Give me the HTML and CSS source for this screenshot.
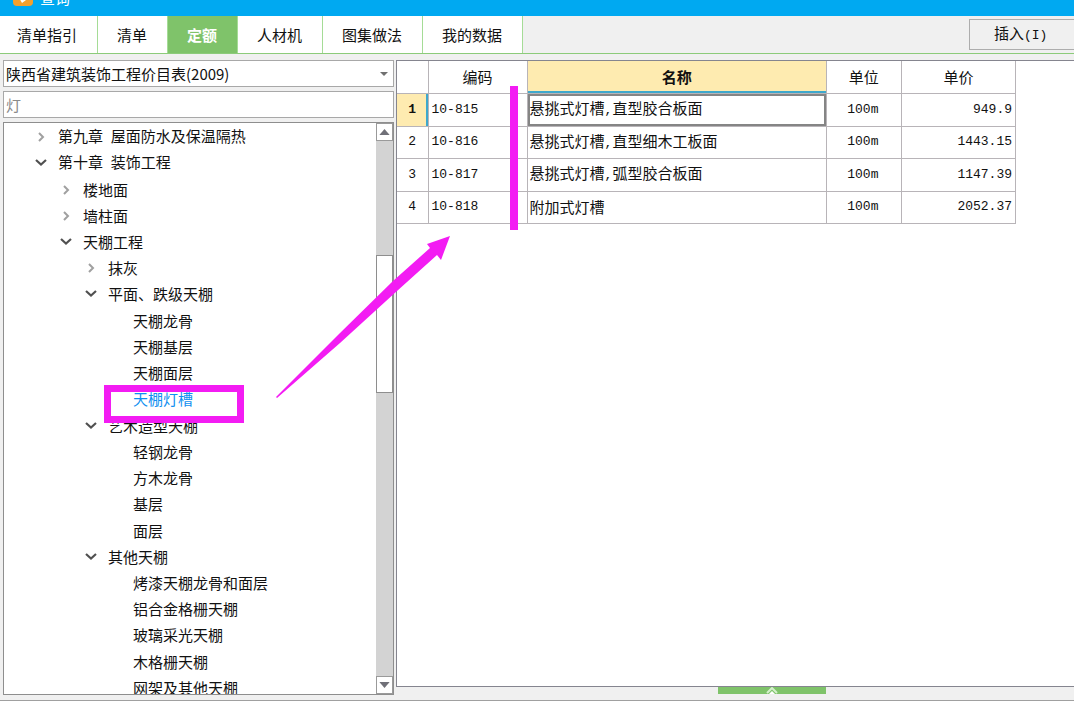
FILE: index.html
```html
<!DOCTYPE html>
<html lang="zh-CN">
<head>
<meta charset="utf-8">
<title>查询</title>
<link rel="stylesheet" href="styles.css">
</head>
<body>
<svg class="defs" aria-hidden="true">
  <symbol id="closed" viewBox="0 0 14 14"><path d="M5 3 L9 7 L5 11" fill="none" stroke="#a0a0a0" stroke-width="2"/></symbol>
  <symbol id="open" viewBox="0 0 14 14"><path d="M2 4 L7 8.500 L12 4" fill="none" stroke="#505050" stroke-width="2.200"/></symbol>
</svg>
<header class="titlebar">
  <svg class="logo" viewBox="0 0 20 20" aria-hidden="true"><rect width="20" height="20" rx="4" fill="#f5a02c"/><path d="M4 8 L9 17 L17 11 L18 2 L4 2 Z" fill="#fff"/><path d="M6 9 L10 13 L16 6" fill="none" stroke="#f5c27a" stroke-width="2"/></svg>
  <span class="title">查询</span>
</header>
<nav class="tabs">
  <button class="tab" type="button">清单指引</button>
  <button class="tab" type="button">清单</button>
  <button class="tab active" type="button">定额</button>
  <button class="tab" type="button">人材机</button>
  <button class="tab" type="button">图集做法</button>
  <button class="tab" type="button">我的数据</button>
  <button class="insert" type="button">插入<span class="mono">(I)</span></button>
</nav>
<main class="main">
  <section class="side">
    <div class="picker">
      <select class="field" aria-label="价目表"><option>陕西省建筑装饰工程价目表(2009)</option></select>
      <svg class="caret" viewBox="0 0 8 4" aria-hidden="true"><path d="M0 0 H8 L4 4 Z" fill="#707070"/></svg>
    </div>
    <input class="field" type="text" placeholder="灯" aria-label="搜索">
    <div class="tree">
      <ul class="list">
        <li class="l0"><button class="toggle" aria-label="展开"><svg><use href="#closed"/></svg></button><span>第九章<span class="mono"> </span>屋面防水及保温隔热</span></li>
        <li class="l0"><button class="toggle" aria-label="折叠"><svg><use href="#open"/></svg></button><span>第十章<span class="mono"> </span>装饰工程</span></li>
        <li class="l1"><button class="toggle" aria-label="展开"><svg><use href="#closed"/></svg></button>楼地面</li>
        <li class="l1"><button class="toggle" aria-label="展开"><svg><use href="#closed"/></svg></button>墙柱面</li>
        <li class="l1"><button class="toggle" aria-label="折叠"><svg><use href="#open"/></svg></button>天棚工程</li>
        <li class="l2"><button class="toggle" aria-label="展开"><svg><use href="#closed"/></svg></button>抹灰</li>
        <li class="l2"><button class="toggle" aria-label="折叠"><svg><use href="#open"/></svg></button>平面、跌级天棚</li>
        <li class="l3">天棚龙骨</li>
        <li class="l3">天棚基层</li>
        <li class="l3">天棚面层</li>
        <li class="l3 current">天棚灯槽</li>
        <li class="l2"><button class="toggle" aria-label="折叠"><svg><use href="#open"/></svg></button>艺术造型天棚</li>
        <li class="l3">轻钢龙骨</li>
        <li class="l3">方木龙骨</li>
        <li class="l3">基层</li>
        <li class="l3">面层</li>
        <li class="l2"><button class="toggle" aria-label="折叠"><svg><use href="#open"/></svg></button>其他天棚</li>
        <li class="l3">烤漆天棚龙骨和面层</li>
        <li class="l3">铝合金格栅天棚</li>
        <li class="l3">玻璃采光天棚</li>
        <li class="l3">木格栅天棚</li>
        <li class="l3">网架及其他天棚</li>
      </ul>
      <div class="scroll">
        <button class="step" type="button" aria-label="向上"><svg viewBox="0 0 12 7"><path d="M0 7 L6 0 L12 7 Z" fill="#707078"/></svg></button>
        <div class="before"></div>
        <div class="thumb"></div>
        <div class="after"></div>
        <button class="step" type="button" aria-label="向下"><svg viewBox="0 0 12 7"><path d="M0 0 L6 7 L12 0 Z" fill="#707078"/></svg></button>
      </div>
    </div>
  </section>
  <section class="content">
    <div class="sheet">
      <table class="grid">
        <colgroup><col class="c-index"><col class="c-code"><col class="c-name"><col class="c-unit"><col class="c-price"></colgroup>
        <thead><tr><th></th><th>编码</th><th class="chosen">名称</th><th>单位</th><th>单价</th></tr></thead>
        <tbody>
          <tr><th class="chosen-row">1</th><td>10-815</td><td class="name focus">悬挑式灯槽<span class="mono">,</span>直型胶合板面</td><td class="unit">100m</td><td class="price">949.9</td></tr>
          <tr><th>2</th><td>10-816</td><td class="name">悬挑式灯槽<span class="mono">,</span>直型细木工板面</td><td class="unit">100m</td><td class="price">1443.15</td></tr>
          <tr><th>3</th><td>10-817</td><td class="name">悬挑式灯槽<span class="mono">,</span>弧型胶合板面</td><td class="unit">100m</td><td class="price">1147.39</td></tr>
          <tr><th>4</th><td>10-818</td><td class="name">附加式灯槽</td><td class="unit">100m</td><td class="price">2052.37</td></tr>
        </tbody>
      </table>
    </div>
    <button class="expand" type="button" aria-label="展开面板"><svg viewBox="0 0 12 7"><path d="M1 6 L6 1 L11 6" fill="none" stroke="#d5f0cc" stroke-width="2"/><path d="M3 7 L6 4 L9 7 Z" fill="#fff"/></svg></button>
  </section>
</main>
<svg class="marks" width="1074" height="714" aria-hidden="true">
  <rect x="107.500" y="388.500" width="133" height="31" fill="none" stroke="#f31cf3" stroke-width="7"/>
  <rect x="510" y="86" width="8" height="144" fill="#f31cf3"/>
  <path d="M276 397 L340 333 L393 281 L430 248 L427 244 L450 236 L441 260 L437 255 L397 291 L340 343 L277 398 Z" fill="#f31cf3"/>
</svg>
</body>
</html>
```

FILE: styles.css
```css
* { box-sizing: border-box; }

body {
  position: relative;
  display: flex;
  flex-direction: column;
  min-height: 100vh;
  margin: 0;
  padding-bottom: 13px;
  overflow: hidden;
  background: #fff;
  color: #111;
  font: 15px/20px "Noto Sans CJK SC", sans-serif;
}

button, input, select { font: inherit; color: inherit; border-radius: 0; }
svg { display: block; }
.defs { position: absolute; width: 0; height: 0; }
.mono { font-family: "Liberation Mono", monospace; font-size: 13px; }

.titlebar {
  display: flex;
  align-items: flex-end;
  gap: 7px;
  height: 16px;
  padding: 0 13px 10px;
  overflow: hidden;
  background: #00a9f1;
  color: #fff;
}
.logo { flex: none; width: 20px; height: 20px; }
.title { margin-bottom: -2px; }

.tabs {
  display: flex;
  height: 38px;
  border-bottom: 1px solid #8ccb7a;
  background: #f0f0f0;
}
.tab {
  padding: 0 20px 0 19px;
  border: 0;
  border-right: 1px solid #a5dc96;
  background: #fff;
  white-space: nowrap;
}
.tab:first-child { padding-left: 17px; }
.tab.active { background: #7fc36a; color: #fff; font-weight: 700; }
.insert {
  align-self: center;
  width: 105px;
  height: 31px;
  margin-left: auto;
  padding: 0 0 0 24px;
  border: 1px solid #adadad;
  border-right: 0;
  background: #f0f0f0;
  text-align: left;
}

.main {
  display: flex;
  flex: 1;
  gap: 2px;
  padding: 6px 0 0 3px;
  border-bottom: 1px solid #a0a0a0;
  background: #f0f0f0;
}
.side {
  display: flex;
  flex-direction: column;
  flex: none;
  width: 391px;
  gap: 4px;
  padding-bottom: 5px;
}
.picker { position: relative; }
.field {
  display: block;
  width: 100%;
  height: 27px;
  padding: 0 2px;
  border: 1px solid #a8a8a8;
  background: #fff;
  appearance: none;
}
.field::placeholder { color: #8a8a8a; }
.caret { position: absolute; top: 12px; right: 6px; width: 8px; height: 4px; }

.tree {
  display: flex;
  flex: 1;
  border: 1px solid #8e8e8e;
  overflow: hidden;
  background: #fff;
}
.list {
  display: grid;
  grid-auto-rows: 1fr;
  flex: 1;
  margin: 1px 0 -7px;
  padding: 0;
  list-style: none;
}
.list li {
  display: flex;
  align-items: center;
  gap: 10px;
  white-space: pre;
}
.l0 { padding-left: 30px; }
.l1 { padding-left: 55px; }
.l2 { padding-left: 80px; }
.l3 { padding-left: 129px; }
.current { color: #1090f0; }
.toggle { width: 14px; height: 14px; padding: 0; border: 0; background: none; }
.toggle svg { width: 14px; height: 14px; }

.scroll {
  display: flex;
  flex-direction: column;
  width: 17px;
  background: #d3d3d3;
}
.step {
  display: grid;
  place-items: center;
  height: 18px;
  padding: 0;
  border: 1px solid #9a9a9a;
  background: #fff;
}
.step svg { width: 11px; height: 6px; }
.before { flex: 115; }
.thumb { flex: 136; border: 1px solid #8e8e8e; background: #fff; }
.after { flex: 285; }

.content {
  display: flex;
  flex: 1;
  flex-direction: column;
  min-width: 0;
  padding-bottom: 6px;
}
.sheet {
  flex: 1;
  border: 1px solid #85858f;
  border-right: 0;
  background: #fff;
}
.grid {
  width: 619px;
  table-layout: fixed;
  border-collapse: collapse;
  border-top: hidden;
  border-left: hidden;
  font: 13px/20px "Liberation Mono", "Noto Sans CJK SC", monospace;
}
.c-index { width: 31px; }
.c-code { width: 99px; }
.c-name { width: 299px; }
.c-unit { width: 75px; }
.c-price { width: 114px; }
.grid tr { height: 32px; }
.grid tbody tr:nth-child(odd) { height: 33px; }
.grid th, .grid td { padding: 0 3px; border: 1px solid #b8b4b8; }
.grid th { padding: 0; font-weight: 400; }
.grid thead th { font-family: "Noto Sans CJK SC", sans-serif; font-size: 15px; }
.grid thead .chosen { background: #feebb0; box-shadow: inset 0 -2px #3fa8cc; font-weight: 700; }
.grid .chosen-row { background: #feebb0; box-shadow: inset -2px 0 #3fa8cc; font-weight: 700; }
.grid .name { padding: 0 2px; font-family: "Noto Sans CJK SC", sans-serif; font-size: 15px; }
.grid .focus { box-shadow: inset 0 0 0 2px #858585; }
.grid .unit { padding-right: 5px; text-align: center; }
.grid .price { text-align: right; }

.expand {
  display: grid;
  place-items: center;
  width: 108px;
  height: 7px;
  margin: 0 auto 0 322px;
  padding: 0;
  border: 0;
  background: #7fc36a;
}
.expand svg { width: 12px; height: 7px; }

/* annotations drawn over the window */
.marks { position: absolute; top: 0; left: 0; pointer-events: none; }
```
